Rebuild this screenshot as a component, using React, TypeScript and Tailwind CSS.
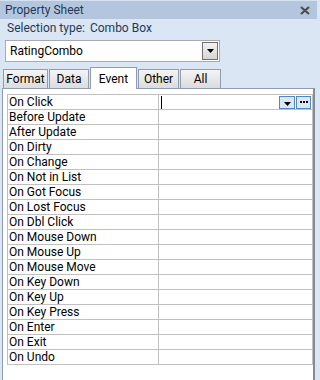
import React from 'react'

const events = [
  'On Click',
  'Before Update',
  'After Update',
  'On Dirty',
  'On Change',
  'On Not in List',
  'On Got Focus',
  'On Lost Focus',
  'On Dbl Click',
  'On Mouse Down',
  'On Mouse Up',
  'On Mouse Move',
  'On Key Down',
  'On Key Up',
  'On Key Press',
  'On Enter',
  'On Exit',
  'On Undo',
]

const tabs = [
  { label: 'Format', w: 'w-[45px]' },
  { label: 'Data', w: 'w-[40px]' },
  { label: 'Event', w: 'w-[47px]' },
  { label: 'Other', w: 'w-[41px]' },
  { label: 'All', w: 'w-[41px]' },
]

export default function App() {
  return (
    <div
      className="w-[320px] h-[380px] bg-[#dae6f4] overflow-hidden text-[12px] leading-[14px]"
      style={{ fontFamily: '"Segoe UI", Roboto, sans-serif' }}
    >
      {/* title bar */}
      <div className="h-[19px] bg-[#b3c6de] border-t border-[#d5e1ef] flex items-center justify-between pl-[5px] pr-[7px] w-[317px]">
        <span className="text-[#1e395b]">Property Sheet</span>
        <svg width="10" height="9" viewBox="0 0 10 9">
          <path d="M1 1 L9 8 M9 1 L1 8" stroke="#4d4d4d" strokeWidth="2.2" />
        </svg>
      </div>

      <div className="h-[18px] flex items-center pl-[7px] text-[#1e395b]">
        <span>Selection type:</span>
        <span className="ml-[5px]">Combo Box</span>
      </div>

      {/* combo */}
      <div className="ml-[5px] mt-[3px] w-[215px] h-[22px] bg-white border border-[#a7abb0] flex items-center justify-between pl-[4px] pr-[1px]">
        <span className="text-black">RatingCombo</span>
        <div className="w-[16px] h-[18px] border border-[#707070] bg-gradient-to-b from-[#f2f2f2] to-[#d6d6d6] flex items-center justify-center">
          <svg width="7" height="4" viewBox="0 0 7 4">
            <path d="M0 0 H7 L3.5 4 Z" fill="#000" />
          </svg>
        </div>
      </div>

      {/* tabs */}
      <div className="mt-[5px] ml-[3px] flex items-end h-[21px] gap-[1px]">
        {tabs.map((t) =>
          t.label === 'Event' ? (
            <div
              key={t.label}
              className={`${t.w} h-[22px] -mb-[1px] bg-white border border-b-0 border-[#8e9bb0] flex items-center justify-center text-black relative z-10`}
            >
              {t.label}
            </div>
          ) : (
            <div
              key={t.label}
              className={`${t.w} h-[19px] bg-gradient-to-b from-[#f4f4f4] to-[#dcdcdc] border border-b-0 border-[#8e9bb0] flex items-center justify-center text-black`}
            >
              {t.label}
            </div>
          )
        )}
      </div>

      {/* panel */}
      <div className="ml-[2px] w-[313px] h-[292px] bg-white border-t border-l border-[#8e9bb0] border-r-2 border-r-[#8a8a96] pl-[4px] pt-[5px]">
        <div className="w-[306px] border border-[#c0c0c0] border-b-0">
          {events.map((e, i) => (
            <div key={e} className="flex h-[15px] border-b border-[#c0c0c0]">
              <div className="w-[151px] border-r border-[#c0c0c0] pl-[1px] flex items-center text-black">
                {e}
              </div>
              <div className="flex-1 flex items-center justify-between">
                {i === 0 && (
                  <>
                    <div className="ml-[2px] w-[1px] h-[13px] bg-black" />
                    <div className="flex gap-[1px] mr-[1px]">
                      <div className="w-[16px] h-[13px] border border-[#4f86c4] bg-[#d9e7f6] flex items-end justify-center pb-[2px]">
                        <svg width="7" height="4" viewBox="0 0 7 4">
                          <path d="M0 0 H7 L3.5 4 Z" fill="#000" />
                        </svg>
                      </div>
                      <div className="w-[15px] h-[13px] border border-[#4f86c4] bg-[#d9e7f6] flex items-center justify-center gap-[1px]">
                        <div className="w-[2px] h-[2px] bg-black" />
                        <div className="w-[2px] h-[2px] bg-black" />
                        <div className="w-[2px] h-[2px] bg-black" />
                      </div>
                    </div>
                  </>
                )}
              </div>
            </div>
          ))}
        </div>
      </div>
    </div>
  )
}
